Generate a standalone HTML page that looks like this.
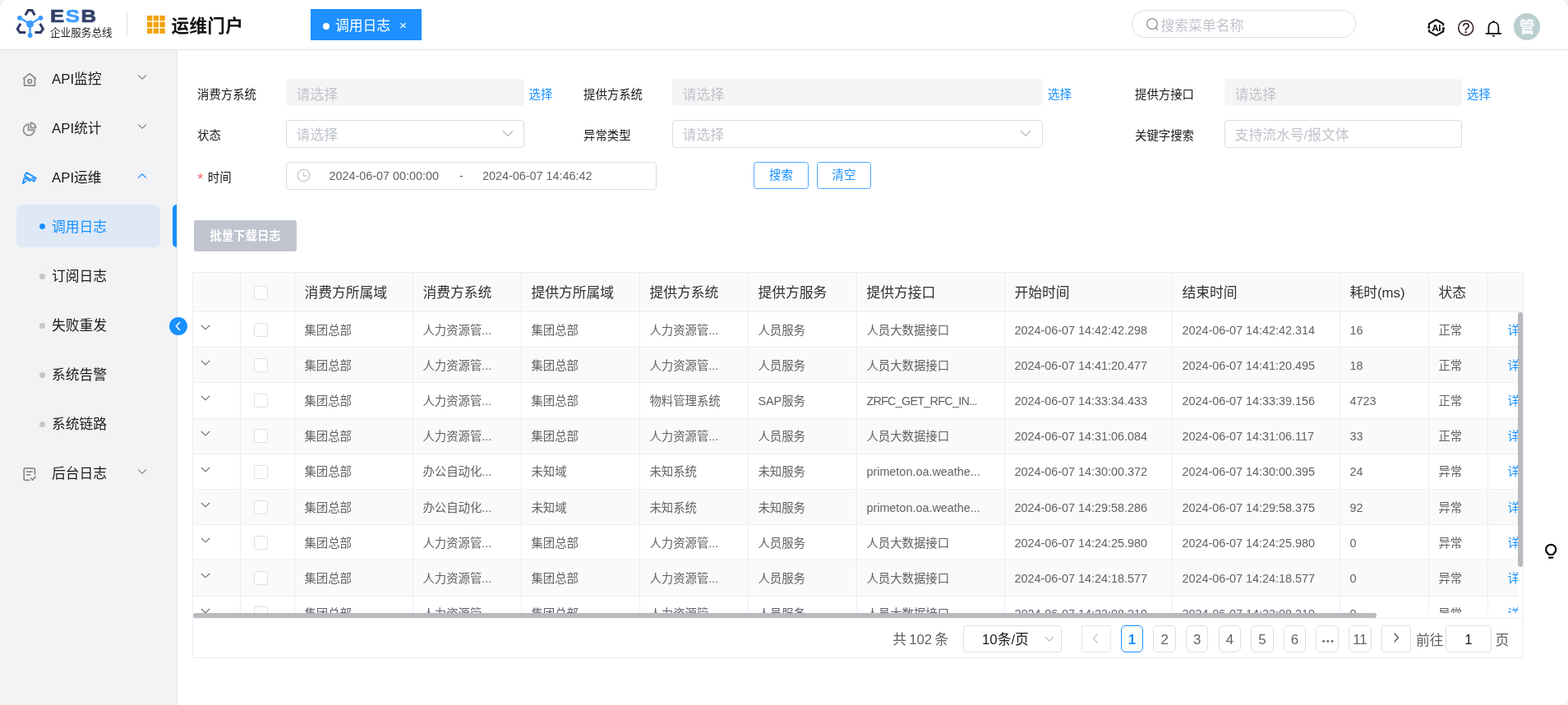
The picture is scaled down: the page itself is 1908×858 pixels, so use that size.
<!DOCTYPE html>
<html lang="zh-CN">
<head>
<meta charset="utf-8">
<title>运维门户 - 调用日志</title>
<style>
*{box-sizing:border-box;margin:0;padding:0}
html,body{width:1908px;height:858px;overflow:hidden;background:#f3f3f3}
body{font-family:"Liberation Sans","Noto Sans CJK SC",sans-serif;color:#1a1a1a;font-size:14.4px}
#app{position:absolute;left:0;top:0;width:1908px;height:858px;background:#fff;border-radius:11px;overflow:hidden;will-change:transform}
.abs{position:absolute}
.t{position:absolute;white-space:nowrap}
/* header */
#hd{position:absolute;left:0;top:0;width:1908px;height:61px;background:#fff;border-bottom:1px solid #dedede}
#esb{left:61px;top:7.5px;font-family:"Liberation Sans",sans-serif;font-weight:bold;font-size:22px;line-height:24px;color:#34416b;-webkit-text-stroke:0.7px #34416b;letter-spacing:1.3px;transform:scaleX(1.17);transform-origin:0 0}
#esb b{-webkit-text-stroke:0.7px #409eff}
#esb b{color:#409eff}
#esbsub{left:61px;top:30.7px;font-size:12.6px;line-height:18px;color:#222}
#vline{left:154px;top:15px;width:1px;height:29px;background:#dcdcdc}
#grid{left:178.6px;top:19px;width:22.2px;height:22.2px}
#ptitle{left:208.5px;top:16px;letter-spacing:0.3px;font-size:21.6px;line-height:32px;font-weight:bold;color:#111}
#tab{left:378px;top:11px;width:135px;height:38px;background:#1e90ff;color:#fff}
#tab .dot{position:absolute;left:15px;top:16.5px;width:8px;height:8px;border-radius:50%;background:#fff}
#tab .tx{left:30px;top:2px;line-height:38px;font-size:16.8px}
#tab .x{left:108px;top:0.7px;line-height:37px;font-size:15.5px}
#search{left:1377px;top:12px;width:273px;height:34px;border:1px solid #dcdcdc;border-radius:17px;background:#fff}
#search .ph{left:34.5px;top:2px;line-height:33px;font-size:16.8px;color:#c0c4cc}
/* sidebar */
#sb{position:absolute;left:0;top:61px;width:216px;height:797px;background:#f2f3f5;border-right:1px solid #e4e4e6}
.mi{position:absolute;margin-top:1.3px;left:63px;font-size:16.8px;line-height:30px;color:#1a1a1a;white-space:nowrap}
.mi.act{color:#1890ff}
.sdot{position:absolute;left:48px;margin-top:-0.5px;width:7px;height:7px;border-radius:50%;background:#c6c6c8}
.ico{position:absolute}
/* form */
.lb{position:absolute;font-size:14.4px;line-height:20px;color:#1a1a1a;white-space:nowrap}
.inp{position:absolute;height:33.6px;border-radius:4px;border:1px solid #d9dce3;background:#fff}
.inp.dis{background:#f5f5f5;border-color:#f5f5f5;height:33px}
.inp.dis .ph{top:2.6px}
.inp .ph{position:absolute;left:11.6px;top:2px;line-height:32px;font-size:16.8px;color:#c0c4cc;white-space:nowrap}
.lk{position:absolute;font-size:14.4px;line-height:20px;color:#1890ff;white-space:nowrap}
.btn{position:absolute;height:33px;border:1px solid #4fa8ff;border-radius:3.5px;color:#1890ff;font-size:14.4px;line-height:31px;text-align:center;background:#fff}
/* table */
#tbwrap{position:absolute;left:234px;top:331px;width:1620px;height:470px;border:1px solid #ebeef5;background:#fff}
#thd{position:absolute;left:0;top:0;width:1618px;height:48px;overflow:hidden}
#tbl{position:absolute;left:0;top:0;width:1612px;height:414px;overflow:hidden}
.row{position:absolute;left:0;width:1700px;height:43.2px;border-bottom:1px solid #ebeef5;background:#fff}
.row.s{background:#fafafa}
.row.h{height:48px;background:#fafafa}
.c{position:absolute;top:0;height:100%;border-right:1px solid #ebeef5;padding-left:11px;font-size:14.4px;line-height:42px;color:#606266;white-space:nowrap;overflow:hidden}
.row.h .c{font-size:16.8px;line-height:47px;color:#303133}
.bt{position:relative;top:0.6px}
.ht{position:relative;top:0.9px}
.pt{position:relative;top:1px}
.dots{position:relative;top:1.5px;font-size:9px;letter-spacing:0.5px;font-family:"DejaVu Sans",sans-serif}
.cb{position:absolute;left:15.6px;width:17px;height:17px;border:1px solid #dcdfe6;border-radius:2.5px;background:#fff}
.pg{position:absolute;top:428.5px;width:27.6px;height:33px;border:1px solid #dcdfe6;border-radius:6px;font-size:16.8px;line-height:32px;text-align:center;color:#606266;background:#fff}
</style>
</head>
<body>
<div id="app">
<!--HEADER-->
<div id="hd">
  <svg class="abs" style="left:18px;top:8px" width="38" height="40" viewBox="18 8 38 40">
    <g fill="none" stroke="#303c66" stroke-width="3" stroke-linejoin="miter">
      <path d="M30.9 18.6 L34.3 12.5 L38.9 12.5 L42.3 18.6"/>
      <path d="M25 28.8 L21.2 35.2 L24.2 39.6 L31.2 39.6"/>
      <path d="M48.6 28.8 L52.4 35.2 L49.4 39.6 L42.4 39.6"/>
    </g>
    <g stroke="#3a9bff" stroke-width="2.4" fill="none">
      <path d="M24 21.8 L36.5 29.2 L49.5 21.8 M36.5 29.2 L36.6 43"/>
    </g>
    <g fill="#3a9bff">
      <circle cx="24" cy="21.8" r="2.9"/><circle cx="49.5" cy="21.8" r="2.9"/>
      <circle cx="36.5" cy="29.2" r="4.5"/><circle cx="36.6" cy="43" r="2.9"/>
    </g>
  </svg>
  <div class="t" id="esb">E<b>S</b>B</div>
  <div class="t" id="esbsub">企业服务总线</div>
  <div class="abs" id="vline"></div>
  <svg class="abs" id="grid" viewBox="0 0 23 23"><g fill="#f0a30a">
    <rect x="0" y="0" width="6.6" height="6.6"/><rect x="8" y="0" width="6.6" height="6.6"/><rect x="16" y="0" width="6.6" height="6.6"/>
    <rect x="0" y="8" width="6.6" height="6.6"/><rect x="8" y="8" width="6.6" height="6.6"/><rect x="16" y="8" width="6.6" height="6.6"/>
    <rect x="0" y="16" width="6.6" height="6.6"/><rect x="8" y="16" width="6.6" height="6.6"/><rect x="16" y="16" width="6.6" height="6.6"/>
  </g></svg>
  <div class="t" id="ptitle">运维门户</div>
  <div class="abs" id="tab"><span class="dot"></span><span class="t tx">调用日志</span><span class="t x">×</span></div>
  <div class="abs" id="search">
    <svg class="abs" style="left:16px;top:8px" width="18" height="18" viewBox="0 0 18 18"><circle cx="8" cy="8" r="6.3" fill="none" stroke="#8f8f8f" stroke-width="1.3"/><path d="M12.6 12.8 L14.6 15" stroke="#8f8f8f" stroke-width="1.3" stroke-linecap="round"/></svg>
    <span class="t ph">搜索菜单名称</span>
  </div>
  <!-- AI icon -->
  <svg class="abs" style="left:1735px;top:21px" width="25" height="25" viewBox="0 0 25 25">
    <g fill="none" stroke="#0a0a0a" stroke-width="2.1" stroke-linejoin="round" stroke-linecap="round">
      <path d="M4 9.9 L4 7.8 L12.6 3 L21.2 7.8 L21.2 9.6"/>
      <path d="M21.2 15.6 L21.2 17.4 L12.6 22.2 L4 17.4 L4 15.8"/>
    </g>
    <circle cx="3.7" cy="12.2" r="1.55" fill="#0a0a0a"/><circle cx="21.5" cy="13.6" r="1.55" fill="#0a0a0a"/>
    <text x="12.6" y="16.7" text-anchor="middle" font-family="Liberation Sans, sans-serif" font-weight="bold" font-size="11.6" fill="#0a0a0a" letter-spacing="-0.5">AI</text>
  </svg>
  <!-- help icon -->
  <svg class="abs" style="left:1772px;top:22px" width="24" height="24" viewBox="0 0 24 24">
    <circle cx="11.7" cy="11.9" r="9" fill="none" stroke="#2a1818" stroke-width="1.5"/>
    <text x="11.9" y="17.6" text-anchor="middle" font-family="Liberation Sans, sans-serif" font-size="16.4" fill="#2a1818" stroke="#2a1818" stroke-width="0.3">?</text>
  </svg>
  <!-- bell -->
  <svg class="abs" style="left:1806px;top:22px" width="24" height="24" viewBox="0 0 24 24">
    <g fill="none" stroke="#0a0a0a" stroke-width="1.7" stroke-linejoin="round">
      <path d="M5.4 18.6 L5.4 11.4 C5.4 7.4 8 5 11.4 5 C14.8 5 17.4 7.4 17.4 11.4 L17.4 18.6"/>
      <path d="M2.4 18.8 L20.4 18.8" stroke-linecap="round"/>
      <path d="M10.6 21.7 L12.2 21.7" stroke-linecap="round"/>
    </g>
    <path d="M10.3 4.6 L11.4 3 L12.5 4.6 Z" fill="#0a0a0a" stroke="#0a0a0a" stroke-width="0.8" stroke-linejoin="round"/>
  </svg>
  <div class="abs" style="left:1842px;top:16.2px;width:32.4px;height:32.4px;border-radius:50%;background:#bccfd0;color:#fff;font-weight:bold;font-size:19px;line-height:35.4px;text-align:center">管</div>
</div>
<!--/HEADER-->
<!--SIDEBAR-->
<div id="sb">
  <!-- top: sidebar coords = page y - 61 -->
  <svg class="ico" style="left:26px;top:26px" width="20" height="20" viewBox="0 0 20 20"><g fill="none" stroke="#8c8c8c" stroke-width="1.75" stroke-linejoin="round"><path d="M2.2 9 L10 2.6 L17.8 9"/><path d="M3.6 8.4 L3.6 17.2 L16.4 17.2 L16.4 8.4"/><circle cx="10.2" cy="11.8" r="2.3"/></g></svg>
  <div class="mi" style="top:20px">API监控</div>
  <svg class="ico" style="left:167px;top:29.2px" width="12" height="8" viewBox="0 0 12 8"><path d="M1 1.4 L6 6.2 L11 1.4" fill="none" stroke="#8a8a8a" stroke-width="1.3"/></svg>

  <svg class="ico" style="left:26px;top:86px" width="20" height="20" viewBox="0 0 20 20"><g fill="none" stroke="#8c8c8c" stroke-width="1.75" stroke-linejoin="round"><path d="M8.6 4.2 A6.8 6.8 0 1 0 16 11.4 L8.6 11.4 Z"/><path d="M11.4 2.4 L11.4 8.6 L17.6 8.6 A6.4 6.4 0 0 0 11.4 2.4 Z"/></g></svg>
  <div class="mi" style="top:80px">API统计</div>
  <svg class="ico" style="left:167px;top:89.2px" width="12" height="8" viewBox="0 0 12 8"><path d="M1 1.4 L6 6.2 L11 1.4" fill="none" stroke="#8a8a8a" stroke-width="1.3"/></svg>

  <svg class="ico" style="left:26px;top:146px" width="20" height="20" viewBox="0 0 20 20"><g fill="none" stroke="#1890ff" stroke-width="1.7" stroke-linejoin="round" stroke-linecap="round"><path d="M6.2 3 L17.6 9.6 L15.4 13.8 L4 7.2 Z"/><path d="M13 9.4 L15 10.6"/><path d="M4.6 9.8 L10.4 13.2"/><path d="M3.4 9.8 L1.8 16.2 L5.6 13.4"/></g></svg>
  <div class="mi" style="top:140px">API运维</div>
  <svg class="ico" style="left:167px;top:149.2px" width="12" height="8" viewBox="0 0 12 8"><path d="M1 6.6 L6 1.8 L11 6.6" fill="none" stroke="#1890ff" stroke-width="1.3"/></svg>

  <div class="abs" style="left:20px;top:188px;width:175px;height:52px;border-radius:7px;background:#dfe9f6"></div>
  <div class="abs" style="left:210px;top:188px;width:5px;height:52px;border-radius:5px 0 0 5px;background:#1890ff"></div>
  <div class="sdot" style="top:211px;background:#1890ff"></div>
  <div class="mi act" style="top:199.5px">调用日志</div>
  <div class="sdot" style="top:272px"></div><div class="mi" style="top:260px">订阅日志</div>
  <div class="sdot" style="top:332px"></div><div class="mi" style="top:320px">失败重发</div>
  <div class="sdot" style="top:392px"></div><div class="mi" style="top:380px">系统告警</div>
  <div class="sdot" style="top:452px"></div><div class="mi" style="top:440px">系统链路</div>

  <svg class="ico" style="left:26px;top:506px" width="20" height="20" viewBox="0 0 20 20"><g fill="none" stroke="#8c8c8c" stroke-width="1.75" stroke-linejoin="round" stroke-linecap="round"><path d="M16.4 10 L16.4 4.6 Q16.4 2.8 14.6 2.8 L5 2.8 Q3.2 2.8 3.2 4.6 L3.2 15.6 Q3.2 17.4 5 17.4 L9.4 17.4"/><path d="M6.6 7.2 L13 7.2 M6.6 10.8 L10.6 10.8"/><path d="M11.6 15.2 L13.6 17.2 L17.2 13.2"/></g></svg>
  <div class="mi" style="top:500px">后台日志</div>
  <svg class="ico" style="left:167px;top:509.2px" width="12" height="8" viewBox="0 0 12 8"><path d="M1 1.4 L6 6.2 L11 1.4" fill="none" stroke="#8a8a8a" stroke-width="1.3"/></svg>
</div>
<div class="abs" style="left:206px;top:386px;width:22px;height:22px;border-radius:50%;background:#1890ff">
  <svg class="abs" style="left:5px;top:4px" width="12" height="14" viewBox="0 0 12 14"><path d="M8 2 L3.4 7 L8 12" fill="none" stroke="#fff" stroke-width="1.6"/></svg>
</div>
<!--/SIDEBAR-->
<!--FORM-->
<!-- row 1 -->
<div class="lb" style="left:240px;top:105px">消费方系统</div>
<div class="inp dis" style="left:348px;top:96px;width:290px"><span class="ph">请选择</span></div>
<div class="lk" style="left:643.5px;top:105px">选择</div>
<div class="lb" style="left:710px;top:105px">提供方系统</div>
<div class="inp dis" style="left:818px;top:96px;width:451px"><span class="ph">请选择</span></div>
<div class="lk" style="left:1275px;top:105px">选择</div>
<div class="lb" style="left:1381px;top:105px">提供方接口</div>
<div class="inp dis" style="left:1490px;top:96px;width:289px"><span class="ph">请选择</span></div>
<div class="lk" style="left:1785px;top:105px">选择</div>
<!-- row 2 -->
<div class="lb" style="left:240px;top:155px">状态</div>
<div class="inp" style="left:348px;top:146px;width:290px"><span class="ph">请选择</span>
  <svg class="abs" style="left:262px;top:11px" width="14" height="9" viewBox="0 0 14 9"><path d="M1 1.2 L7 7.4 L13 1.2" fill="none" stroke="#b4b8c0" stroke-width="1.3"/></svg></div>
<div class="lb" style="left:710px;top:155px">异常类型</div>
<div class="inp" style="left:818px;top:146px;width:451px"><span class="ph">请选择</span>
  <svg class="abs" style="left:422px;top:11px" width="14" height="9" viewBox="0 0 14 9"><path d="M1 1.2 L7 7.4 L13 1.2" fill="none" stroke="#b4b8c0" stroke-width="1.3"/></svg></div>
<div class="lb" style="left:1381px;top:155px">关键字搜索</div>
<div class="inp" style="left:1490px;top:146px;width:289px"><span class="ph">支持流水号/报文体</span></div>
<!-- row 3 -->
<div class="lb" style="left:240px;top:207.5px;font-size:19px;color:#f56c6c">*</div><div class="lb" style="left:252.8px;top:206px">时间</div>
<div class="inp" style="left:348px;top:197px;width:451px">
  <svg class="abs" style="left:12.4px;top:6.6px" width="17" height="17" viewBox="0 0 17 17"><circle cx="8.5" cy="8.5" r="7.2" fill="none" stroke="#c0c4cc" stroke-width="1.3"/><path d="M8.3 4.4 L8.3 9 L12.2 9" fill="none" stroke="#c0c4cc" stroke-width="1.3"/></svg>
  <span class="t" style="left:51.5px;top:1.3px;line-height:31px;font-size:14.4px;color:#606266">2024-06-07 00:00:00</span>
  <span class="t" style="left:210px;top:1.3px;line-height:31px;font-size:14.4px;color:#606266">-</span>
  <span class="t" style="left:238px;top:1.3px;line-height:31px;font-size:14.4px;color:#606266">2024-06-07 14:46:42</span>
</div>
<div class="btn" style="left:917px;top:197px;width:67px">搜索</div>
<div class="btn" style="left:994px;top:197px;width:66px">清空</div>
<div class="abs" style="left:236px;top:268px;width:125px;height:37.5px;border-radius:3px;background:#c0c4cf;color:#fff;font-weight:bold;font-size:14.4px;line-height:39.6px;text-align:center">批量下载日志</div>
<!-- bulb -->
<svg class="abs" style="left:1877px;top:659px" width="20" height="24" viewBox="0 0 20 24"><path d="M7.6 16 C7.2 14.4 4.1 13.6 4.1 9.9 A6.1 6.1 0 0 1 16.3 9.9 C16.3 13.6 13.2 14.4 12.8 16 Z" fill="none" stroke="#0a0a0a" stroke-width="2.2" stroke-linejoin="round"/><path d="M8 19.6 L12.4 19.6" stroke="#0a0a0a" stroke-width="2.2" stroke-linecap="round"/></svg>
<!--/FORM-->
<!--TABLE-->
<div id="tbwrap">
<div id="thd">
<div class="row h" style="top:0"><div class="c" style="left:0.0px;width:58.4px;"></div><div class="c" style="left:58.4px;width:66.0px;"><span class="cb" style="top:16px"></span></div><div class="c" style="left:124.4px;width:144.0px;"><span class="ht">消费方所属域</span></div><div class="c" style="left:268.4px;width:132.0px;"><span class="ht">消费方系统</span></div><div class="c" style="left:400.4px;width:144.0px;"><span class="ht">提供方所属域</span></div><div class="c" style="left:544.4px;width:132.0px;"><span class="ht">提供方系统</span></div><div class="c" style="left:676.4px;width:132.0px;"><span class="ht">提供方服务</span></div><div class="c" style="left:808.4px;width:180.0px;"><span class="ht">提供方接口</span></div><div class="c" style="left:988.4px;width:204.0px;"><span class="ht">开始时间</span></div><div class="c" style="left:1192.4px;width:204.0px;"><span class="ht">结束时间</span></div><div class="c" style="left:1396.4px;width:108.0px;"><span class="ht">耗时(ms)</span></div><div class="c" style="left:1504.4px;width:72.0px;"><span class="ht">状态</span></div><div class="c" style="left:1576.4px;width:60px;border-right:none;"></div></div>
</div>
<div id="tbl">
<div class="row" style="top:48.0px"><div class="c" style="left:0.0px;width:58.4px;"><svg class="abs" style="left:9.3px;top:14.9px" width="12" height="7" viewBox="0 0 12 7"><path d="M0.8 0.8 L6 5.8 L11.2 0.8" fill="none" stroke="#606060" stroke-width="1.15"/></svg></div><div class="c" style="left:58.4px;width:66.0px;"><span class="cb" style="top:12.9px"></span></div><div class="c" style="left:124.4px;width:144.0px;"><span class="bt">集团总部</span></div><div class="c" style="left:268.4px;width:132.0px;"><span class="bt">人力资源管...</span></div><div class="c" style="left:400.4px;width:144.0px;"><span class="bt">集团总部</span></div><div class="c" style="left:544.4px;width:132.0px;"><span class="bt">人力资源管...</span></div><div class="c" style="left:676.4px;width:132.0px;"><span class="bt">人员服务</span></div><div class="c" style="left:808.4px;width:180.0px;"><span class="bt">人员大数据接口</span></div><div class="c" style="left:988.4px;width:204.0px;"><span class="bt">2024-06-07 14:42:42.298</span></div><div class="c" style="left:1192.4px;width:204.0px;"><span class="bt">2024-06-07 14:42:42.314</span></div><div class="c" style="left:1396.4px;width:108.0px;"><span class="bt">16</span></div><div class="c" style="left:1504.4px;width:72.0px;"><span class="bt">正常</span></div><div class="c" style="left:1576.4px;width:60px;border-right:none;"><span class="bt" style="color:#1890ff;margin-left:12px">详情</span></div></div>
<div class="row s" style="top:91.2px"><div class="c" style="left:0.0px;width:58.4px;"><svg class="abs" style="left:9.3px;top:14.9px" width="12" height="7" viewBox="0 0 12 7"><path d="M0.8 0.8 L6 5.8 L11.2 0.8" fill="none" stroke="#606060" stroke-width="1.15"/></svg></div><div class="c" style="left:58.4px;width:66.0px;"><span class="cb" style="top:12.9px"></span></div><div class="c" style="left:124.4px;width:144.0px;"><span class="bt">集团总部</span></div><div class="c" style="left:268.4px;width:132.0px;"><span class="bt">人力资源管...</span></div><div class="c" style="left:400.4px;width:144.0px;"><span class="bt">集团总部</span></div><div class="c" style="left:544.4px;width:132.0px;"><span class="bt">人力资源管...</span></div><div class="c" style="left:676.4px;width:132.0px;"><span class="bt">人员服务</span></div><div class="c" style="left:808.4px;width:180.0px;"><span class="bt">人员大数据接口</span></div><div class="c" style="left:988.4px;width:204.0px;"><span class="bt">2024-06-07 14:41:20.477</span></div><div class="c" style="left:1192.4px;width:204.0px;"><span class="bt">2024-06-07 14:41:20.495</span></div><div class="c" style="left:1396.4px;width:108.0px;"><span class="bt">18</span></div><div class="c" style="left:1504.4px;width:72.0px;"><span class="bt">正常</span></div><div class="c" style="left:1576.4px;width:60px;border-right:none;"><span class="bt" style="color:#1890ff;margin-left:12px">详情</span></div></div>
<div class="row" style="top:134.4px"><div class="c" style="left:0.0px;width:58.4px;"><svg class="abs" style="left:9.3px;top:14.9px" width="12" height="7" viewBox="0 0 12 7"><path d="M0.8 0.8 L6 5.8 L11.2 0.8" fill="none" stroke="#606060" stroke-width="1.15"/></svg></div><div class="c" style="left:58.4px;width:66.0px;"><span class="cb" style="top:12.9px"></span></div><div class="c" style="left:124.4px;width:144.0px;"><span class="bt">集团总部</span></div><div class="c" style="left:268.4px;width:132.0px;"><span class="bt">人力资源管...</span></div><div class="c" style="left:400.4px;width:144.0px;"><span class="bt">集团总部</span></div><div class="c" style="left:544.4px;width:132.0px;"><span class="bt">物料管理系统</span></div><div class="c" style="left:676.4px;width:132.0px;"><span class="bt">SAP服务</span></div><div class="c" style="left:808.4px;width:180.0px;"><span class="bt" style="letter-spacing:-0.75px">ZRFC_GET_RFC_IN...</span></div><div class="c" style="left:988.4px;width:204.0px;"><span class="bt">2024-06-07 14:33:34.433</span></div><div class="c" style="left:1192.4px;width:204.0px;"><span class="bt">2024-06-07 14:33:39.156</span></div><div class="c" style="left:1396.4px;width:108.0px;"><span class="bt">4723</span></div><div class="c" style="left:1504.4px;width:72.0px;"><span class="bt">正常</span></div><div class="c" style="left:1576.4px;width:60px;border-right:none;"><span class="bt" style="color:#1890ff;margin-left:12px">详情</span></div></div>
<div class="row s" style="top:177.6px"><div class="c" style="left:0.0px;width:58.4px;"><svg class="abs" style="left:9.3px;top:14.9px" width="12" height="7" viewBox="0 0 12 7"><path d="M0.8 0.8 L6 5.8 L11.2 0.8" fill="none" stroke="#606060" stroke-width="1.15"/></svg></div><div class="c" style="left:58.4px;width:66.0px;"><span class="cb" style="top:12.9px"></span></div><div class="c" style="left:124.4px;width:144.0px;"><span class="bt">集团总部</span></div><div class="c" style="left:268.4px;width:132.0px;"><span class="bt">人力资源管...</span></div><div class="c" style="left:400.4px;width:144.0px;"><span class="bt">集团总部</span></div><div class="c" style="left:544.4px;width:132.0px;"><span class="bt">人力资源管...</span></div><div class="c" style="left:676.4px;width:132.0px;"><span class="bt">人员服务</span></div><div class="c" style="left:808.4px;width:180.0px;"><span class="bt">人员大数据接口</span></div><div class="c" style="left:988.4px;width:204.0px;"><span class="bt">2024-06-07 14:31:06.084</span></div><div class="c" style="left:1192.4px;width:204.0px;"><span class="bt">2024-06-07 14:31:06.117</span></div><div class="c" style="left:1396.4px;width:108.0px;"><span class="bt">33</span></div><div class="c" style="left:1504.4px;width:72.0px;"><span class="bt">正常</span></div><div class="c" style="left:1576.4px;width:60px;border-right:none;"><span class="bt" style="color:#1890ff;margin-left:12px">详情</span></div></div>
<div class="row" style="top:220.8px"><div class="c" style="left:0.0px;width:58.4px;"><svg class="abs" style="left:9.3px;top:14.9px" width="12" height="7" viewBox="0 0 12 7"><path d="M0.8 0.8 L6 5.8 L11.2 0.8" fill="none" stroke="#606060" stroke-width="1.15"/></svg></div><div class="c" style="left:58.4px;width:66.0px;"><span class="cb" style="top:12.9px"></span></div><div class="c" style="left:124.4px;width:144.0px;"><span class="bt">集团总部</span></div><div class="c" style="left:268.4px;width:132.0px;"><span class="bt">办公自动化...</span></div><div class="c" style="left:400.4px;width:144.0px;"><span class="bt">未知域</span></div><div class="c" style="left:544.4px;width:132.0px;"><span class="bt">未知系统</span></div><div class="c" style="left:676.4px;width:132.0px;"><span class="bt">未知服务</span></div><div class="c" style="left:808.4px;width:180.0px;"><span class="bt">primeton.oa.weathe...</span></div><div class="c" style="left:988.4px;width:204.0px;"><span class="bt">2024-06-07 14:30:00.372</span></div><div class="c" style="left:1192.4px;width:204.0px;"><span class="bt">2024-06-07 14:30:00.395</span></div><div class="c" style="left:1396.4px;width:108.0px;"><span class="bt">24</span></div><div class="c" style="left:1504.4px;width:72.0px;"><span class="bt">异常</span></div><div class="c" style="left:1576.4px;width:60px;border-right:none;"><span class="bt" style="color:#1890ff;margin-left:12px">详情</span></div></div>
<div class="row s" style="top:264.0px"><div class="c" style="left:0.0px;width:58.4px;"><svg class="abs" style="left:9.3px;top:14.9px" width="12" height="7" viewBox="0 0 12 7"><path d="M0.8 0.8 L6 5.8 L11.2 0.8" fill="none" stroke="#606060" stroke-width="1.15"/></svg></div><div class="c" style="left:58.4px;width:66.0px;"><span class="cb" style="top:12.9px"></span></div><div class="c" style="left:124.4px;width:144.0px;"><span class="bt">集团总部</span></div><div class="c" style="left:268.4px;width:132.0px;"><span class="bt">办公自动化...</span></div><div class="c" style="left:400.4px;width:144.0px;"><span class="bt">未知域</span></div><div class="c" style="left:544.4px;width:132.0px;"><span class="bt">未知系统</span></div><div class="c" style="left:676.4px;width:132.0px;"><span class="bt">未知服务</span></div><div class="c" style="left:808.4px;width:180.0px;"><span class="bt">primeton.oa.weathe...</span></div><div class="c" style="left:988.4px;width:204.0px;"><span class="bt">2024-06-07 14:29:58.286</span></div><div class="c" style="left:1192.4px;width:204.0px;"><span class="bt">2024-06-07 14:29:58.375</span></div><div class="c" style="left:1396.4px;width:108.0px;"><span class="bt">92</span></div><div class="c" style="left:1504.4px;width:72.0px;"><span class="bt">异常</span></div><div class="c" style="left:1576.4px;width:60px;border-right:none;"><span class="bt" style="color:#1890ff;margin-left:12px">详情</span></div></div>
<div class="row" style="top:307.2px"><div class="c" style="left:0.0px;width:58.4px;"><svg class="abs" style="left:9.3px;top:14.9px" width="12" height="7" viewBox="0 0 12 7"><path d="M0.8 0.8 L6 5.8 L11.2 0.8" fill="none" stroke="#606060" stroke-width="1.15"/></svg></div><div class="c" style="left:58.4px;width:66.0px;"><span class="cb" style="top:12.9px"></span></div><div class="c" style="left:124.4px;width:144.0px;"><span class="bt">集团总部</span></div><div class="c" style="left:268.4px;width:132.0px;"><span class="bt">人力资源管...</span></div><div class="c" style="left:400.4px;width:144.0px;"><span class="bt">集团总部</span></div><div class="c" style="left:544.4px;width:132.0px;"><span class="bt">人力资源管...</span></div><div class="c" style="left:676.4px;width:132.0px;"><span class="bt">人员服务</span></div><div class="c" style="left:808.4px;width:180.0px;"><span class="bt">人员大数据接口</span></div><div class="c" style="left:988.4px;width:204.0px;"><span class="bt">2024-06-07 14:24:25.980</span></div><div class="c" style="left:1192.4px;width:204.0px;"><span class="bt">2024-06-07 14:24:25.980</span></div><div class="c" style="left:1396.4px;width:108.0px;"><span class="bt">0</span></div><div class="c" style="left:1504.4px;width:72.0px;"><span class="bt">异常</span></div><div class="c" style="left:1576.4px;width:60px;border-right:none;"><span class="bt" style="color:#1890ff;margin-left:12px">详情</span></div></div>
<div class="row s" style="top:350.4px"><div class="c" style="left:0.0px;width:58.4px;"><svg class="abs" style="left:9.3px;top:14.9px" width="12" height="7" viewBox="0 0 12 7"><path d="M0.8 0.8 L6 5.8 L11.2 0.8" fill="none" stroke="#606060" stroke-width="1.15"/></svg></div><div class="c" style="left:58.4px;width:66.0px;"><span class="cb" style="top:12.9px"></span></div><div class="c" style="left:124.4px;width:144.0px;"><span class="bt">集团总部</span></div><div class="c" style="left:268.4px;width:132.0px;"><span class="bt">人力资源管...</span></div><div class="c" style="left:400.4px;width:144.0px;"><span class="bt">集团总部</span></div><div class="c" style="left:544.4px;width:132.0px;"><span class="bt">人力资源管...</span></div><div class="c" style="left:676.4px;width:132.0px;"><span class="bt">人员服务</span></div><div class="c" style="left:808.4px;width:180.0px;"><span class="bt">人员大数据接口</span></div><div class="c" style="left:988.4px;width:204.0px;"><span class="bt">2024-06-07 14:24:18.577</span></div><div class="c" style="left:1192.4px;width:204.0px;"><span class="bt">2024-06-07 14:24:18.577</span></div><div class="c" style="left:1396.4px;width:108.0px;"><span class="bt">0</span></div><div class="c" style="left:1504.4px;width:72.0px;"><span class="bt">异常</span></div><div class="c" style="left:1576.4px;width:60px;border-right:none;"><span class="bt" style="color:#1890ff;margin-left:12px">详情</span></div></div>
<div class="row" style="top:393.6px"><div class="c" style="left:0.0px;width:58.4px;"><svg class="abs" style="left:9.3px;top:14.9px" width="12" height="7" viewBox="0 0 12 7"><path d="M0.8 0.8 L6 5.8 L11.2 0.8" fill="none" stroke="#606060" stroke-width="1.15"/></svg></div><div class="c" style="left:58.4px;width:66.0px;"><span class="cb" style="top:12.9px"></span></div><div class="c" style="left:124.4px;width:144.0px;"><span class="bt">集团总部</span></div><div class="c" style="left:268.4px;width:132.0px;"><span class="bt">人力资源管...</span></div><div class="c" style="left:400.4px;width:144.0px;"><span class="bt">集团总部</span></div><div class="c" style="left:544.4px;width:132.0px;"><span class="bt">人力资源管...</span></div><div class="c" style="left:676.4px;width:132.0px;"><span class="bt">人员服务</span></div><div class="c" style="left:808.4px;width:180.0px;"><span class="bt">人员大数据接口</span></div><div class="c" style="left:988.4px;width:204.0px;"><span class="bt">2024-06-07 14:23:08.219</span></div><div class="c" style="left:1192.4px;width:204.0px;"><span class="bt">2024-06-07 14:23:08.219</span></div><div class="c" style="left:1396.4px;width:108.0px;"><span class="bt">0</span></div><div class="c" style="left:1504.4px;width:72.0px;"><span class="bt">异常</span></div><div class="c" style="left:1576.4px;width:60px;border-right:none;"><span class="bt" style="color:#1890ff;margin-left:12px">详情</span></div></div>
</div>
<div class="abs" style="left:1612px;top:48px;width:6px;height:310px;border-radius:3px;background:#b9babf"></div>
<div class="abs" style="left:0;top:420px;width:1618px;height:1px;background:#ebeef5"></div>
<div class="abs" style="left:0;top:414px;width:1440px;height:6px;border-radius:3px;background:#b9babf"></div>
<div class="t" style="left:852px;top:428.5px;line-height:33px;font-size:16.8px;color:#606266"><span class="pt" style="top:1.3px;word-spacing:-1.5px;margin-left:-0.8px">共 102 条</span></div>
<div class="abs" style="left:937px;top:428.5px;width:120px;height:33px;border:1px solid #dcdfe6;border-radius:4px"><span class="t" style="left:22px;top:0;line-height:31px;font-size:16.8px;color:#1a1a1a"><span class="pt" style="top:1.3px">10条/页</span></span><svg class="abs" style="left:98px;top:12px" width="12" height="8" viewBox="0 0 12 8"><path d="M1 1.2 L6 6 L11 1.2" fill="none" stroke="#c0c4cc" stroke-width="1.3"/></svg></div>
<div class="pg" style="left:1081px;width:36px;border-radius:3px;border-color:#e6e8ee"><svg class="abs" style="left:11px;top:8px" width="10" height="14" viewBox="0 0 10 14"><path d="M7.4 1.6 L2.6 7 L7.4 12.4" fill="none" stroke="#c8ccd4" stroke-width="1.5"/></svg></div>
<div class="pg" style="left:1128.7px;border-color:#1890ff;color:#1890ff;font-weight:bold"><span class="pt">1</span></div>
<div class="pg" style="left:1168.3px"><span class="pt">2</span></div>
<div class="pg" style="left:1207.9px"><span class="pt">3</span></div>
<div class="pg" style="left:1247.5px"><span class="pt">4</span></div>
<div class="pg" style="left:1287.1px"><span class="pt">5</span></div>
<div class="pg" style="left:1326.7px"><span class="pt">6</span></div>
<div class="pg" style="left:1366.3px"><svg class="abs" style="left:4.3px;top:16.2px" width="18" height="5" viewBox="0 0 18 5"><circle cx="3.6" cy="2.4" r="1.4" fill="#606266"/><circle cx="8.8" cy="2.4" r="1.4" fill="#606266"/><circle cx="14" cy="2.4" r="1.4" fill="#606266"/></svg></div>
<div class="pg" style="left:1405.9px;width:28px"><span class="pt">11</span></div>
<div class="pg" style="left:1446px;width:36px;border-radius:3px"><svg class="abs" style="left:12.2px;top:7.6px" width="10" height="14" viewBox="0 0 10 14"><path d="M2.6 1.6 L7.4 7 L2.6 12.4" fill="none" stroke="#555" stroke-width="1.4"/></svg></div>
<div class="t" style="left:1488px;top:428.5px;line-height:33px;font-size:16.8px;color:#606266"><span class="pt" style="top:2.8px">前往</span></div>
<div class="abs" style="left:1524px;top:428.5px;width:56px;height:33px;border:1px solid #dcdfe6;border-radius:4px;text-align:center;line-height:31px;font-size:16.8px;color:#1a1a1a"><span class="pt">1</span></div>
<div class="t" style="left:1584.5px;top:428.5px;line-height:33px;font-size:16.8px;color:#606266"><span class="pt" style="top:2.8px">页</span></div>
</div>
<!--/TABLE-->
</div>
</body>
</html>
